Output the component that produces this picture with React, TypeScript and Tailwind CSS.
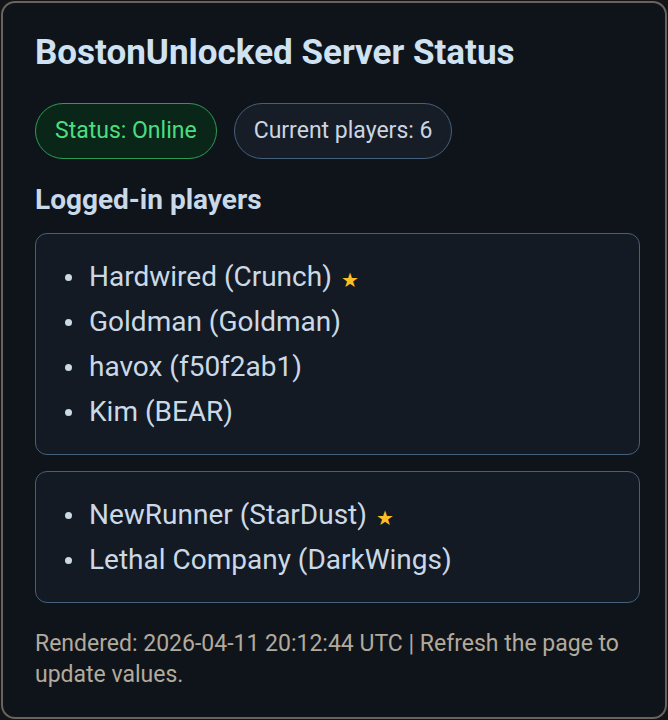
const groups = [
  [
    { name: 'Hardwired (Crunch)', star: true },
    { name: 'Goldman (Goldman)' },
    { name: 'havox (f50f2ab1)' },
    { name: 'Kim (BEAR)' },
  ],
  [
    { name: 'NewRunner (StarDust)', star: true },
    { name: 'Lethal Company (DarkWings)' },
  ],
]

export default function App() {
  return (
    <div className="min-h-screen bg-[#121417] p-[1px] font-['Roboto',_'Liberation_Sans',_sans-serif]">
      <div className="h-[718px] rounded-[14px] border-2 border-[#68645d] bg-[#0f141b] pl-[32px] pr-[25px] pt-[30px]">
        <h1 className="text-[35px] font-bold leading-[40px] text-[#cfe2f3]">
          BostonUnlocked Server Status
        </h1>

        <div className="mt-[30px] flex gap-[17px]">
          <span className="rounded-full border border-[#2d9b57] bg-[#0a2619] px-[19px] py-[13px] text-[23px] leading-[28px] text-[#4ade80]">
            Status: Online
          </span>
          <span className="rounded-full border border-[#46607c] bg-[#161d27] px-[19px] py-[13px] text-[23px] leading-[28px] text-[#cbd5e1]">
            Current players: 6
          </span>
        </div>

        <h2 className="mt-[24px] text-[28px] font-bold leading-[34px] text-[#c9d9e8]">
          Logged-in players
        </h2>

        <div className="mt-[16px] flex flex-col gap-[16px]">
          {groups.map((group, i) => (
            <div
              key={i}
              className="rounded-[12px] border border-[#46607c] bg-[#131a23] py-[20px] pl-[29px] pr-4"
            >
              <ul className="text-[28px] leading-[45px] text-[#cbd9e6]">
                {group.map((p) => (
                  <li key={p.name} className="flex h-[45px] items-center">
                    <span className="mr-[17px] mt-[2px] h-[7px] w-[7px] rounded-full bg-[#cbd9e6]" />
                    <span>{p.name}</span>
                    {p.star && (
                      <span className="ml-[9px] mt-[6px] text-[20px] leading-none text-[#fbbf24]">★</span>
                    )}
                  </li>
                ))}
              </ul>
            </div>
          ))}
        </div>

        <p className="mt-[25px] text-[23px] leading-[31px] text-[#b3aa9b]">
          Rendered: 2026-04-11 20:12:44 UTC | Refresh the page to update values.
        </p>
      </div>
    </div>
  )
}
